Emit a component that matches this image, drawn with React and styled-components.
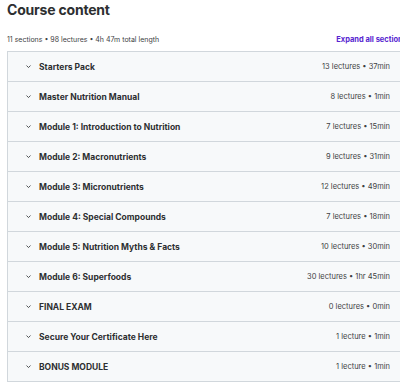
import React from 'react';
import styled, { createGlobalStyle } from 'styled-components';

const GlobalStyle = createGlobalStyle`
  html, body {
    margin: 0;
    padding: 0;
    background: #ffffff;
    overflow: hidden;
  }
  body {
    font-family: Inter, "Noto Sans", sans-serif;
    color: #2d2f31;
  }
`;

const Page = styled.div`
  width: 400px;
  padding: 2px 0 0 7px;
`;

const Heading = styled.h2`
  margin: 0;
  font-size: 14px;
  line-height: 16px;
  font-weight: 700;
  letter-spacing: -0.2px;
  color: #2d2f31;
`;

const SummaryBar = styled.div`
  display: flex;
  justify-content: space-between;
  align-items: center;
  margin-top: 15px;
  height: 12px;
  margin-bottom: 6px;
`;

const Summary = styled.span`
  font-size: 7px;
  color: #3e4143;
`;

const ExpandLink = styled.button`
  border: none;
  background: none;
  padding: 0;
  font-family: inherit;
  font-size: 7.5px;
  font-weight: 700;
  color: #5624d0;
  cursor: pointer;
  white-space: nowrap;
`;

const SectionList = styled.div`
  border: 1px solid #d1d7dc;
  border-bottom: none;
`;

const SectionRow = styled.div`
  display: flex;
  align-items: center;
  height: 29px;
  padding: 0 16px 0 17px;
  background: #f7f9fa;
  border-bottom: 1px solid #d1d7dc;
`;

const Chevron = styled.svg`
  width: 7px;
  height: 7px;
  margin-right: 7px;
  flex-shrink: 0;
`;

const SectionTitle = styled.span`
  flex: 1;
  font-size: 8.5px;
  font-weight: 700;
  color: #2d2f31;
`;

const SectionMeta = styled.span`
  font-size: 7.5px;
  color: #3e4143;
  white-space: nowrap;
`;

const sections = [
  { title: 'Starters Pack', lectures: 13, length: '37min' },
  { title: 'Master Nutrition Manual', lectures: 8, length: '1min' },
  { title: 'Module 1: Introduction to Nutrition', lectures: 7, length: '15min' },
  { title: 'Module 2: Macronutrients', lectures: 9, length: '31min' },
  { title: 'Module 3: Micronutrients', lectures: 12, length: '49min' },
  { title: 'Module 4: Special Compounds', lectures: 7, length: '18min' },
  { title: 'Module 5: Nutrition Myths & Facts', lectures: 10, length: '30min' },
  { title: 'Module 6: Superfoods', lectures: 30, length: '1hr 45min' },
  { title: 'FINAL EXAM', lectures: 0, length: '0min' },
  { title: 'Secure Your Certificate Here', lectures: 1, length: '1min' },
  { title: 'BONUS MODULE', lectures: 1, length: '1min' },
];

const ChevronDown = () => (
  <Chevron viewBox="0 0 10 10" fill="none">
    <path d="M2.5 4 L5 6.5 L7.5 4" stroke="#3e4143" strokeWidth="1.3" strokeLinecap="round" strokeLinejoin="round" />
  </Chevron>
);

const App = () => (
  <Page>
    <GlobalStyle />
    <Heading>Course content</Heading>
    <SummaryBar>
      <Summary>11 sections • 98 lectures • 4h 47m total length</Summary>
      <ExpandLink>Expand all sections</ExpandLink>
    </SummaryBar>
    <SectionList>
      {sections.map((s) => (
        <SectionRow key={s.title}>
          <ChevronDown />
          <SectionTitle>{s.title}</SectionTitle>
          <SectionMeta>
            {s.lectures} {s.lectures === 1 ? 'lecture' : 'lectures'} • {s.length}
          </SectionMeta>
        </SectionRow>
      ))}
    </SectionList>
  </Page>
);

export default App;
